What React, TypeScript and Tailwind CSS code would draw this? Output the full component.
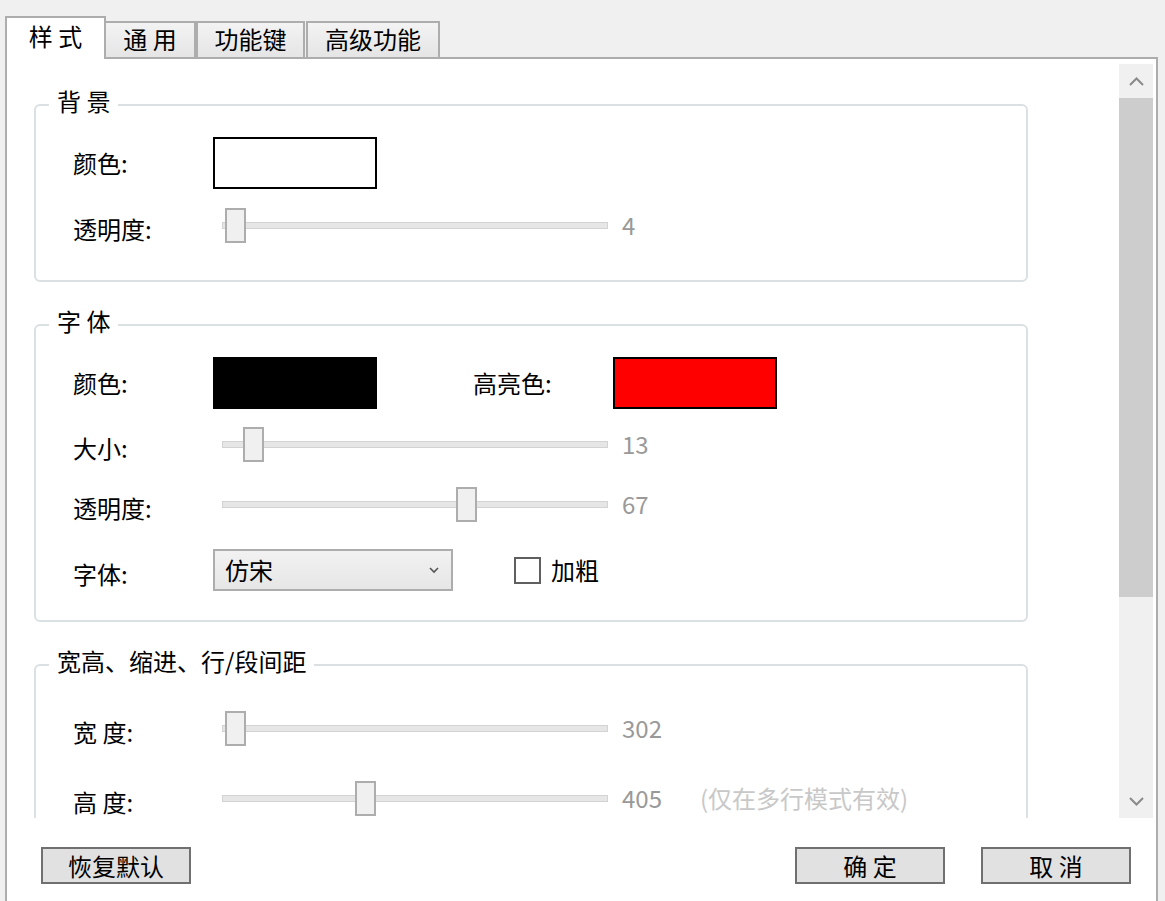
import React from "react";

const FONT = "font-['Noto_Sans_CJK_SC','Noto_Sans',sans-serif]";

function Slider({ pos, value, note }: { pos: number; value: string; note?: string }) {
  return (
    <div className="flex items-center">
      <div className="relative ml-[9px] flex h-[35px] w-[386px] items-center">
        <div className="h-[7px] w-full border border-[#d3d3d3] bg-[#e6e6e6]" />
        <div
          className="absolute top-0 h-[35px] w-[21px] border-2 border-[#adadad] bg-[#f0f0f0]"
          style={{ left: pos }}
        />
      </div>
      <span className="ml-[14px] text-[24px] leading-[32px] text-[#999999]">{value}</span>
      {note && <span className="ml-[38px] text-[24px] leading-[32px] text-[#c8c8c8]">{note}</span>}
    </div>
  );
}

function Label({ children, shift }: { children: React.ReactNode; shift?: boolean }) {
  return (
    <div className={`w-[140px] shrink-0 text-[24px] leading-[32px] text-black ${shift ? "pt-[7px]" : ""}`}>
      {children}
    </div>
  );
}

function Swatch({ color }: { color: string }) {
  return <div className={`h-[52px] w-[164px] border-2 border-black ${color}`} />;
}

function Group({ title, className, children }: { title: string; className: string; children: React.ReactNode }) {
  return (
    <div className={`relative w-[994px] shrink-0 rounded-[6px] border-2 border-[#dbe0e3] pl-[37px] ${className}`}>
      <span className="absolute left-[13px] top-[-20px] bg-white px-2 text-[24px] leading-[30px] text-black">
        {title}
      </span>
      {children}
    </div>
  );
}

function Chevron({ up }: { up?: boolean }) {
  return (
    <svg width="15" height="9" viewBox="0 0 15 9">
      <polyline
        points={up ? "1,8 7.5,1.5 14,8" : "1,1 7.5,7.5 14,1"}
        fill="none"
        stroke="#8a8a8a"
        strokeWidth="2"
      />
    </svg>
  );
}

function Button({ children }: { children: React.ReactNode }) {
  return (
    <div className="flex h-[37px] w-[150px] items-center justify-center border-2 border-[#707070] bg-[#e1e1e1] text-[24px] leading-[30px] text-black">
      {children}
    </div>
  );
}

export default function App() {
  return (
    <div className={`${FONT} flex h-[901px] w-[1165px] flex-col overflow-hidden bg-[#f0f0f0] pl-[5px] pt-[16px]`}>
      {/* tabs */}
      <div className="relative z-10 flex h-[41px] items-end">
        <div className="-mb-[2px] flex h-[43px] w-[101px] items-center justify-center border-2 border-b-0 border-[#adadad] bg-white pb-[5px] text-[24px] leading-[30px] text-black">
          样 式
        </div>
        <div className="flex h-[36px] w-[90px] items-center justify-center border-2 border-b-0 border-l-0 border-[#adadad] bg-gradient-to-b from-[#f3f3f3] to-[#e5e5e5] pb-[2px] text-[24px] leading-[30px] text-black">
          通 用
        </div>
        <div className="flex h-[36px] w-[109px] items-center justify-center border-2 border-b-0 border-[#adadad] bg-gradient-to-b from-[#f3f3f3] to-[#e5e5e5] pb-[2px] text-[24px] leading-[30px] text-black">
          功能键
        </div>
        <div className="ml-[1px] flex h-[36px] w-[134px] items-center justify-center border-2 border-b-0 border-[#adadad] bg-gradient-to-b from-[#f3f3f3] to-[#e5e5e5] pb-[2px] text-[24px] leading-[30px] text-black">
          高级功能
        </div>
      </div>

      {/* pane */}
      <div className="flex w-[1153px] flex-1 flex-col border-2 border-b-0 border-[#adadad] bg-white">
        <div className="mt-[5px] flex h-[754px]">
          {/* viewport */}
          <div className="flex w-[1112px] flex-col overflow-hidden pl-[27px] pt-[40px]">
            <Group title="背 景" className="pt-[31px] pb-[18px]">
              <div className="flex h-[51px] items-center">
                <Label>颜色:</Label>
                <Swatch color="bg-white" />
              </div>
              <div className="flex h-[74px] items-center">
                <Label shift>透明度:</Label>
                <Slider pos={3} value="4" />
              </div>
            </Group>

            <Group title="字 体" className="mt-[42px] pt-[31px] pb-[8px]">
              <div className="flex h-[51px] items-center">
                <Label>颜色:</Label>
                <Swatch color="bg-black" />
                <div className="ml-[96px] flex items-center">
                  <Label>高亮色:</Label>
                  <Swatch color="bg-[#ff0000]" />
                </div>
              </div>
              <div className="flex h-[72px] items-center">
                <Label shift>大小:</Label>
                <Slider pos={21} value="13" />
              </div>
              <div className="flex h-[48px] items-center">
                <Label shift>透明度:</Label>
                <Slider pos={234} value="67" />
              </div>
              <div className="flex h-[84px] items-center">
                <Label shift>字体:</Label>
                <div className="flex h-[42px] w-[240px] items-center justify-between border-2 border-[#adadad] bg-gradient-to-b from-[#f2f2f2] to-[#e6e6e6] pl-[10px] pr-[12px] text-[24px] leading-[30px] text-black">
                  <span>仿宋</span>
                  <svg width="10" height="7" viewBox="0 0 10 7">
                    <polyline points="1,1 5,5 9,1" fill="none" stroke="#555" strokeWidth="1.6" />
                  </svg>
                </div>
                <div className="ml-[61px] flex items-center">
                  <div className="h-[27px] w-[27px] border-2 border-[#5f5f5f] bg-white" />
                  <span className="ml-[10px] text-[24px] leading-[30px] text-black">加粗</span>
                </div>
              </div>
            </Group>

            <Group title="宽高、缩进、行/段间距" className="mt-[42px] pt-[42px] pb-[120px]">
              <div className="flex h-[40px] items-center">
                <Label shift>宽 度:</Label>
                <Slider pos={3} value="302" />
              </div>
              <div className="mt-[30px] flex h-[40px] items-center">
                <Label shift>高 度:</Label>
                <Slider pos={133} value="405" note="(仅在多行模式有效)" />
              </div>
            </Group>
          </div>

          {/* scrollbar */}
          <div className="flex w-[34px] flex-col bg-[#f0f0f0]">
            <div className="flex h-[34px] items-center justify-center">
              <Chevron up />
            </div>
            <div className="h-[499px] bg-[#cdcdcd]" />
            <div className="flex-1" />
            <div className="flex h-[34px] items-center justify-center">
              <Chevron />
            </div>
          </div>
        </div>

        {/* buttons */}
        <div className="mt-[29px] flex items-center pl-[34px] pr-[25px]">
          <Button>恢复默认</Button>
          <div className="flex-1" />
          <Button>确 定</Button>
          <div className="w-[36px]" />
          <Button>取 消</Button>
        </div>
      </div>
    </div>
  );
}
